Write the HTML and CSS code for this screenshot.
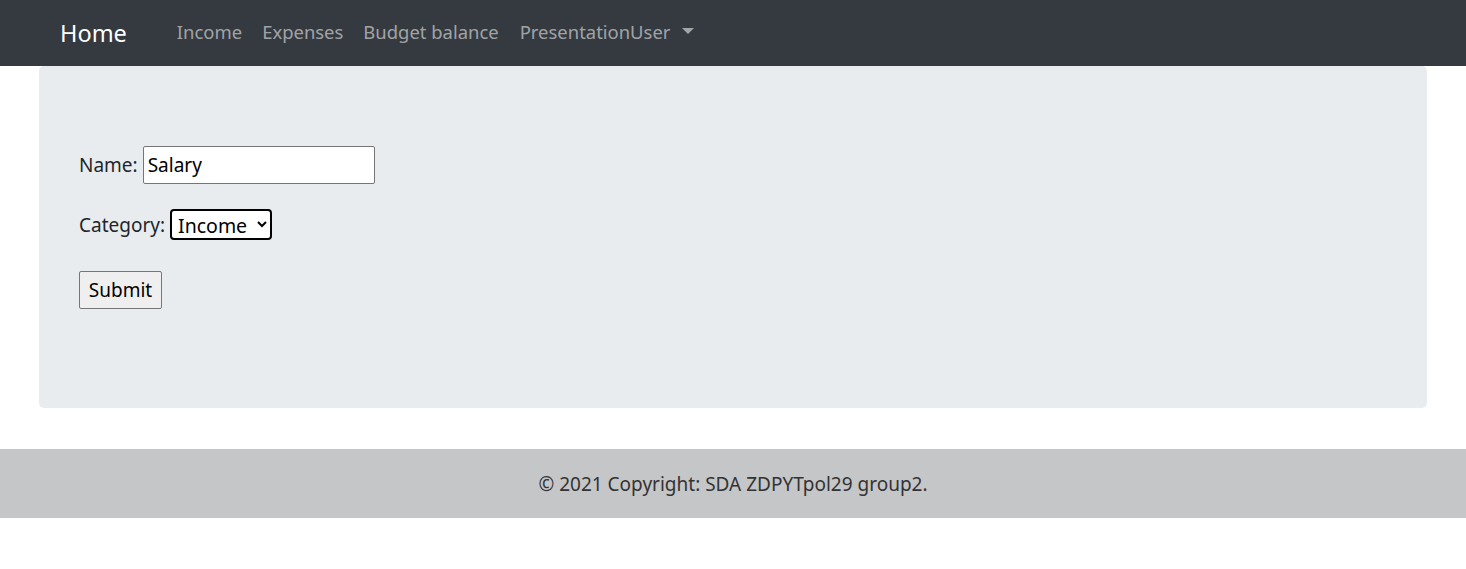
FILE: index.html
```html
<!DOCTYPE html>
<html lang="en">
<head>
<meta charset="utf-8">
<title>Home</title>
<link rel="stylesheet" href="styles.css">
</head>
<body>
<nav class="navbar">
  <a class="brand" href="#">Home</a>
  <ul class="nav">
    <li><a class="nav-link" href="#">Income</a></li>
    <li><a class="nav-link" href="#">Expenses</a></li>
    <li><a class="nav-link" href="#">Budget balance</a></li>
    <li><a class="nav-link dropdown" href="#">PresentationUser<span class="caret"></span></a></li>
  </ul>
</nav>
<main class="container">
  <div class="jumbotron">
    <form class="form">
      <p class="row"><label for="name">Name:</label> <input id="name" class="text-input" type="text" value="Salary"></p>
      <p class="row"><label for="cat">Category:</label> <select id="cat" class="select"><option>Income</option><option>Expense</option></select></p>
      <p class="row"><button type="button" class="btn">Submit</button></p>
    </form>
  </div>
</main>
<footer class="footer">
  <div class="copy">© 2021 Copyright: SDA ZDPYTpol29 group2.</div>
</footer>
</body>
</html>
```

FILE: styles.css
```css
html, body {
  margin: 0;
  padding: 0;
}
body {
  font-family: "Noto Sans", "Open Sans", sans-serif;
  font-size: 19px;
  color: #212529;
  background: #fff;
}
.navbar {
  background: #343a40;
  height: 66px;
  display: flex;
  align-items: center;
  padding-left: 60px;
}
.brand {
  color: #fff;
  text-decoration: none;
  font-size: 23.5px;
  margin-right: 40px;
}
.nav {
  list-style: none;
  display: flex;
  margin: 0;
  padding: 0;
}
.nav-link {
  display: inline-flex;
  align-items: center;
  color: rgba(255,255,255,.55);
  text-decoration: none;
  padding: 0 10px;
  font-size: 18.45px;
  position: relative;
  top: -1px;
}
.dropdown {
  padding-left: 11px;
}
.caret {
  display: inline-block;
  width: 0;
  height: 0;
  margin-left: 12px;
  border-top: 6px solid rgba(255,255,255,.55);
  border-left: 6px solid transparent;
  border-right: 6px solid transparent;
  position: relative;
  top: -1px;
}
.container {
  padding: 0 39px 0 39px;
}
.jumbotron {
  background: #e9ecef;
  border-radius: 5px;
  padding: 80px 40px;
  margin-bottom: 41px;
  height: 182px;
}
.form {
  margin: 0;
}
.row {
  margin: 0 0 25px 0;
  display: flex;
  align-items: center;
  gap: 5px;
}
.row:nth-child(1) { height: 38px; }
.row:nth-child(2) { height: 31px; margin-bottom: 30px; }
.row:nth-child(3) { position: relative; top: 1px; }
.text-input {
  font-family: inherit;
  font-size: 19px;
  width: 232px;
  height: 38px;
  box-sizing: border-box;
  border: 1px solid #767676;
  border-radius: 2px;
  padding: 1px 4px;
  color: #000;
  background: #fff;
}
.select {
  font-family: inherit;
  font-size: 19.5px;
  width: 102px;
  height: 31px;
  box-sizing: border-box;
  border: 2px solid #000;
  border-radius: 4px;
  padding: 0 2px;
  color: #000;
  background: #fff;
}
.btn {
  font-family: inherit;
  font-size: 19px;
  width: 83px;
  height: 38px;
  border: 1px solid #767676;
  border-radius: 2px;
  background: #efefef;
  color: #000;
  padding: 0;
}
.footer {
  background: #c5c6c8;
  height: 69px;
  display: flex;
  align-items: center;
  justify-content: center;
}
.copy {
  color: #333;
  font-size: 19px;
}
```
